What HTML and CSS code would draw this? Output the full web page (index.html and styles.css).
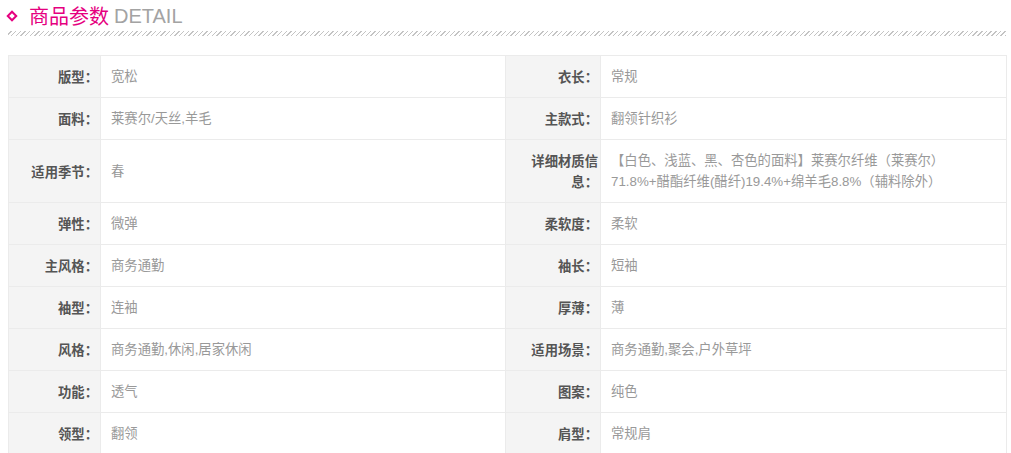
FILE: index.html
```html
<!DOCTYPE html>
<html lang="zh-CN">
<head>
<meta charset="utf-8">
<title>商品参数</title>
<link rel="stylesheet" href="styles.css">
</head>
<body>
<div class="detail">
  <div class="title">
    <span class="diamond"></span>
    <span class="title-cn">商品参数</span>
    <span class="title-en">DETAIL</span>
  </div>
  <div class="hatch"></div>
  <table class="params">
    <colgroup>
      <col class="c-label"><col class="c-value"><col class="c-label2"><col class="c-value2">
    </colgroup>
    <tbody>
      <tr><th>版型：</th><td>宽松</td><th>衣长：</th><td>常规</td></tr>
      <tr><th>面料：</th><td>莱赛尔/天丝,羊毛</td><th>主款式：</th><td>翻领针织衫</td></tr>
      <tr><th>适用季节：</th><td>春</td><th>详细材质信息：</th><td>【白色、浅蓝、黑、杏色的面料】莱赛尔纤维（莱赛尔）71.8%+醋酯纤维(醋纤)19.4%+绵羊毛8.8%（辅料除外）</td></tr>
      <tr><th>弹性：</th><td>微弹</td><th>柔软度：</th><td>柔软</td></tr>
      <tr><th>主风格：</th><td>商务通勤</td><th>袖长：</th><td>短袖</td></tr>
      <tr><th>袖型：</th><td>连袖</td><th>厚薄：</th><td>薄</td></tr>
      <tr><th>风格：</th><td>商务通勤,休闲,居家休闲</td><th>适用场景：</th><td>商务通勤,聚会,户外草坪</td></tr>
      <tr><th>功能：</th><td>透气</td><th>图案：</th><td>纯色</td></tr>
      <tr><th>领型：</th><td>翻领</td><th>肩型：</th><td>常规肩</td></tr>
    </tbody>
  </table>
</div>
</body>
</html>
```
FILE: styles.css
```css
* { box-sizing: border-box; }
html, body {
  margin: 0;
  padding: 0;
  background: #fff;
}
body {
  font-family: "Liberation Sans", "Noto Sans CJK SC", sans-serif;
}
.detail {
  padding: 3px 5px 0 8px;
}
.title {
  display: flex;
  align-items: center;
  height: 26px;
  font-size: 20px;
  line-height: 26px;
}
.diamond {
  width: 8px;
  height: 8px;
  border: 2px solid #e5007f;
  transform: rotate(45deg);
  margin: 0 13px 0 0;
  flex: none;
}
.title-cn {
  color: #e5007f;
  margin-right: 5px;
  font-family: "Noto Sans CJK SC", sans-serif;
}
.title-en {
  color: #a3a3a3;
  font-family: "Liberation Sans", sans-serif;
}
.hatch {
  height: 5px;
  margin-top: 2px;
  margin-bottom: 19px;
  background: repeating-linear-gradient(-45deg, #c4c4c4 0 1px, transparent 1px 3.3px);
}
.params {
  width: 998px;
  border-collapse: collapse;
  table-layout: fixed;
  font-size: 13.33px;
  line-height: 21px;
}
.c-label { width: 92px; }
.c-value { width: 405px; }
.c-label2 { width: 95px; }
.c-value2 { width: 406px; }
.params th,
.params td {
  border: 1px solid #ebebeb;
  padding: 10px;
  vertical-align: middle;
}
.params th {
  background: #f4f4f4;
  color: #555;
  font-weight: bold;
  text-align: right;
  padding-left: 20px;
  padding-right: 2px;
  font-family: "Noto Sans CJK SC", sans-serif;
}
.params td {
  color: #999;
  text-align: left;
  padding-left: 10px;
}
```
